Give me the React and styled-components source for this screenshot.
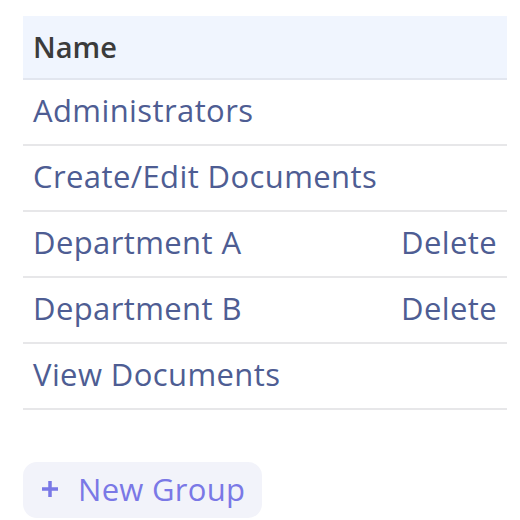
import React from 'react'
import styled, { createGlobalStyle } from 'styled-components'

const GlobalStyle = createGlobalStyle`
  body {
    margin: 0;
    background: #fff;
    font-family: 'Open Sans', 'Noto Sans', sans-serif;
  }
`

const Page = styled.div`
  padding: 16px 13px 0 23px;
`

const Table = styled.div`
  display: flex;
  flex-direction: column;
`

const HeaderRow = styled.div`
  display: flex;
  align-items: center;
  height: 64px;
  padding: 0 10px 2px;
  box-sizing: border-box;
  background: #f0f5fe;
  border-bottom: 2px solid #e2e6ef;
  color: #3b3b3b;
  font-size: 29px;
  font-weight: 600;
`

const Row = styled.div`
  display: flex;
  align-items: center;
  justify-content: space-between;
  height: 66px;
  box-sizing: border-box;
  padding: 0 10px 4px;
  border-bottom: 2px solid #e7e7e9;
  color: #4e5d93;
  font-size: 31px;
  letter-spacing: 0.4px;
`

const DeleteLink = styled.span`
  color: #4e5d93;
  cursor: pointer;
`

const NewButton = styled.button`
  display: inline-flex;
  align-items: center;
  gap: 18px;
  margin-top: 52px;
  height: 56px;
  padding: 0 17px 3px 17px;
  border: none;
  border-radius: 14px;
  background: #f2f3fa;
  color: #7a78e6;
  font-family: inherit;
  font-size: 31px;
  letter-spacing: 0.3px;
  cursor: pointer;
`

const groups = [
  { name: 'Administrators', deletable: false },
  { name: 'Create/Edit Documents', deletable: false },
  { name: 'Department A', deletable: true },
  { name: 'Department B', deletable: true },
  { name: 'View Documents', deletable: false },
]

export default function App() {
  return (
    <>
      <GlobalStyle />
      <Page>
        <Table>
          <HeaderRow>Name</HeaderRow>
          {groups.map((g) => (
            <Row key={g.name}>
              <span>{g.name}</span>
              {g.deletable && <DeleteLink>Delete</DeleteLink>}
            </Row>
          ))}
        </Table>
        <NewButton>
          <svg width="20" height="20" viewBox="0 0 20 20">
            <path d="M10 2v16M2 10h16" stroke="currentColor" strokeWidth="3.5" />
          </svg>
          New Group
        </NewButton>
      </Page>
    </>
  )
}
